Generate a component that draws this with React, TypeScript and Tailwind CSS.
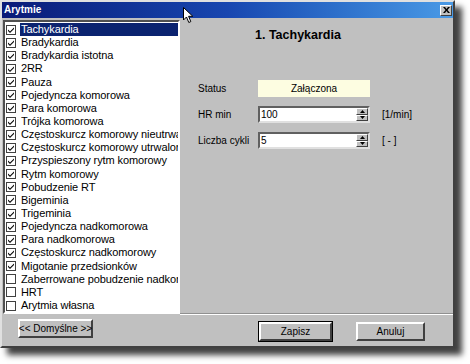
import React from 'react'

const items: { label: string; checked: boolean }[] = [
  { label: 'Tachykardia', checked: true },
  { label: 'Bradykardia', checked: true },
  { label: 'Bradykardia istotna', checked: true },
  { label: '2RR', checked: true },
  { label: 'Pauza', checked: true },
  { label: 'Pojedyncza komorowa', checked: true },
  { label: 'Para komorowa', checked: true },
  { label: 'Trójka komorowa', checked: true },
  { label: 'Częstoskurcz komorowy nieutrwalony', checked: true },
  { label: 'Częstoskurcz komorowy utrwalony', checked: true },
  { label: 'Przyspieszony rytm komorowy', checked: true },
  { label: 'Rytm komorowy', checked: true },
  { label: 'Pobudzenie RT', checked: true },
  { label: 'Bigeminia', checked: true },
  { label: 'Trigeminia', checked: true },
  { label: 'Pojedyncza nadkomorowa', checked: true },
  { label: 'Para nadkomorowa', checked: true },
  { label: 'Częstoskurcz nadkomorowy', checked: true },
  { label: 'Migotanie przedsionków', checked: true },
  { label: 'Zaberrowane pobudzenie nadkomorowe', checked: false },
  { label: 'HRT', checked: false },
  { label: 'Arytmia własna', checked: false },
]

function CheckBox({ checked }: { checked: boolean }) {
  return (
    <svg width="10" height="10" viewBox="0 0 10 10" className="shrink-0">
      <rect x="0.5" y="0.5" width="9" height="9" fill="#fff" stroke="#404040" />
      {checked && <path d="M2 4.5 L4 6.5 L8 2.5 L8 4 L4 8 L2 6 Z" fill="#000" />}
    </svg>
  )
}

function Spinner() {
  return (
    <div className="flex flex-col w-[12px] h-full shrink-0">
      <div className="flex-1 bg-[#c0c0c0] border border-t-white border-l-white border-r-[#404040] border-b-[#404040] flex items-center justify-center">
        <svg width="5" height="3" viewBox="0 0 5 3"><path d="M2.5 0 L5 3 L0 3 Z" fill="#000" /></svg>
      </div>
      <div className="flex-1 bg-[#c0c0c0] border border-t-white border-l-white border-r-[#404040] border-b-[#404040] flex items-center justify-center">
        <svg width="5" height="3" viewBox="0 0 5 3"><path d="M0 0 L5 0 L2.5 3 Z" fill="#000" /></svg>
      </div>
    </div>
  )
}

function SpinInput({ value }: { value: string }) {
  return (
    <div className="flex h-[17px] w-[112px] bg-white border-2 border-t-[#606060] border-l-[#606060] border-r-[#e0e0e0] border-b-[#e0e0e0]">
      <div className="flex-1 pl-[1px] text-[10px] leading-[13px] text-black">{value}</div>
      <Spinner />
    </div>
  )
}

function WinButton({ label, isDefault, className }: { label: string; isDefault?: boolean; className: string }) {
  return (
    <div className={`${className} ${isDefault ? 'border border-black' : ''} bg-[#c0c0c0]`}>
      <div className="w-full h-full border-2 border-t-white border-l-white border-r-[#404040] border-b-[#404040] flex items-center justify-center text-[10px] text-black whitespace-nowrap">
        {label}
      </div>
    </div>
  )
}

export default function App() {
  return (
    <div className="relative w-[470px] h-[364px] bg-white font-['Liberation_Sans',Arial,sans-serif]">
      <div className="w-[455px] h-[348px] bg-[#c0c0c0] border-2 border-t-[#e0e0e0] border-l-[#e0e0e0] border-r-[#404040] border-b-[#404040] shadow-[7px_7px_6px_rgba(0,0,0,0.75)] flex flex-col">
        {/* title bar */}
        <div className="h-[16px] shrink-0 flex items-center bg-gradient-to-r from-[#0a1a78] via-[#1846b0] to-[#4a9ae6]">
          <span className="pl-[2px] text-[10px] font-bold text-white leading-none">Arytmie</span>
          <div className="ml-auto mr-[1px] w-[12px] h-[11px] bg-[#c0c0c0] border border-t-white border-l-white border-r-[#404040] border-b-[#404040] flex items-center justify-center">
            <svg width="7" height="6" viewBox="0 0 7 6">
              <path d="M0 0 L2 0 L3.5 2 L5 0 L7 0 L4.5 3 L7 6 L5 6 L3.5 4 L2 6 L0 6 L2.5 3 Z" fill="#000" />
            </svg>
          </div>
        </div>

        {/* body */}
        <div className="flex h-[297px] shrink-0">
          <div className="pt-[2px] pl-[1px]">
            <div className="w-[177px] h-[294px] bg-white border-2 border-t-[#505050] border-l-[#505050] border-r-white border-b-white overflow-hidden pt-[1px]">
              {items.map((item, i) => (
                <div key={i} className="flex items-center h-[13.15px] whitespace-nowrap overflow-hidden">
                  <div className="pl-[1px] pr-[4px] flex items-center">
                    <CheckBox checked={item.checked} />
                  </div>
                  <div
                    className={`flex-1 h-full flex items-center pl-[1px] text-[11px] tracking-[-0.1px] leading-none overflow-hidden ${
                      i === 0 ? 'bg-[#0b2370] text-white' : 'text-black'
                    }`}
                  >
                    {item.label}
                  </div>
                </div>
              ))}
            </div>
          </div>

          <div className="flex-1 border-b border-b-white">
            <div className="h-full border-b border-b-[#909090] pl-[18px]">
              <div className="pt-[10px] pl-[57px] text-[12.5px] font-bold text-black leading-[14px]">1. Tachykardia</div>
              <div className="mt-[38px] grid grid-cols-[60px_112px_auto] gap-y-[9px] items-center text-[10px] text-black whitespace-nowrap">
                <span>Status</span>
                <div className="h-[17px] bg-[#fdfde1] flex items-center justify-center">Załączona</div>
                <span />
                <span>HR min</span>
                <SpinInput value="100" />
                <span className="pl-[12px]">[1/min]</span>
                <span>Liczba cykli</span>
                <SpinInput value="5" />
                <span className="pl-[12px]">[ - ]</span>
              </div>
            </div>
          </div>
        </div>

        {/* buttons */}
        <div className="flex items-start flex-1">
          <WinButton label="<< Domyślne >>" className="ml-[16px] mt-[4px] w-[75px] h-[19px]" />
          <WinButton label="Zapisz" isDefault className="ml-[165px] mt-[6px] w-[75px] h-[21px]" />
          <WinButton label="Anuluj" className="ml-[23px] mt-[7px] w-[69px] h-[19px]" />
        </div>
      </div>

      {/* mouse pointer */}
      <svg className="absolute left-[183px] top-[7px]" width="11" height="17" viewBox="0 0 11 17">
        <path d="M0.5 0.5 L0.5 13 L3.5 10 L5.8 15.5 L7.8 14.6 L5.6 9.3 L9.8 9.3 Z" fill="#fff" stroke="#000" strokeWidth="1" />
      </svg>
    </div>
  )
}
